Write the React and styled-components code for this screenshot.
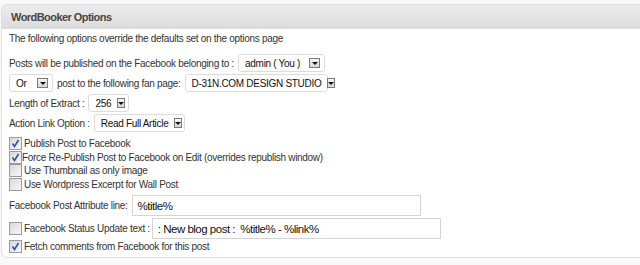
import React from 'react';
import styled, { createGlobalStyle } from 'styled-components';

const GlobalStyle = createGlobalStyle`
  body {
    margin: 0;
    background: #f9f9f9;
    font-family: "Liberation Sans", Arial, sans-serif;
    font-size: 10px;
    letter-spacing: -0.3px;
    color: #333;
  }
`;

const Page = styled.div`
  width: 640px;
  height: 265px;
  overflow: hidden;
  padding-top: 4px;
  box-sizing: border-box;
`;

const Box = styled.div`
  margin-left: 1px;
  width: 660px;
  height: 254px;
  border: 1px solid #dfdfdf;
  border-radius: 6px;
  background: #fff;
  overflow: hidden;
  box-sizing: border-box;
`;

const Header = styled.div`
  height: 23px;
  display: flex;
  align-items: center;
  padding-left: 9px;
  background: linear-gradient(to bottom, #ececec, #dcdcdc);
  border-bottom: 1px solid #dcdcdc;
  font-weight: bold;
  font-size: 11px;
  letter-spacing: -0.55px;
  color: #464646;
`;

const Body = styled.div`
  padding: 0 0 0 7px;
`;

const Row = styled.div`
  display: flex;
  align-items: center;
  gap: ${p => p.gap || 4}px;
  height: ${p => p.h || 20}px;
  margin-top: ${p => p.mt || 0}px;
  white-space: nowrap;
`;

const Select = styled.div`
  display: flex;
  align-items: center;
  justify-content: space-between;
  gap: 6px;
  width: ${p => p.w}px;
  height: 18px;
  box-sizing: border-box;
  padding: 0 4px 0 6px;
  border: 1px solid #dcdcdc;
  border-radius: 3px;
  background: #fff;
  color: #111;
`;

const Arrow = styled.span`
  display: flex;
  align-items: center;
  justify-content: center;
  width: 11px;
  height: 10px;
  box-sizing: border-box;
  border: 1px solid #7a7a7a;
  background: linear-gradient(to bottom, #f4f4f4, #d8d8d8);
  &::after {
    content: '';
    border-left: 3px solid transparent;
    border-right: 3px solid transparent;
    border-top: 3px solid #111;
  }
`;

const CheckRow = styled.label`
  display: flex;
  align-items: center;
  gap: ${p => p.gap ?? 2}px;
  height: ${p => p.h || 13.5}px;
  margin-top: ${p => p.mt || 0}px;
  white-space: nowrap;
`;

const CheckBox = styled.span`
  display: flex;
  align-items: center;
  justify-content: center;
  width: 13px;
  height: 13px;
  box-sizing: border-box;
  border: 1px solid #9a9a9a;
  background: linear-gradient(135deg, #d8d8d8, #f8f8f8);
  flex: none;
`;

const TextInput = styled.div`
  width: ${p => p.w}px;
  height: 21px;
  box-sizing: border-box;
  display: flex;
  align-items: center;
  padding-left: 5px;
  border: 1px solid #d4d4d4;
  background: #fff;
  color: #111;
  font-size: 11.5px;
  letter-spacing: -0.5px;
`;

const Spacer = styled.div`
  height: ${p => p.h}px;
`;

const Check = ({ on }) => (
  <CheckBox>
    {on && (
      <svg width="9" height="9" viewBox="0 0 9 9">
        <path d="M1.5 4.5 L3.5 7.5 L7.5 1" stroke="#2a56b8" strokeWidth="1.6" fill="none" />
      </svg>
    )}
  </CheckBox>
);

const Dropdown = ({ w, children }) => (
  <Select w={w}>
    <span>{children}</span>
    <Arrow />
  </Select>
);

export default function App() {
  return (
    <Page>
      <GlobalStyle />
      <Box>
        <Header>WordBooker Options</Header>
        <Body>
          <Row h={18}>The following options override the defaults set on the options page</Row>
          <Row mt={6}>
            Posts will be published on the Facebook belonging to :
            <Dropdown w={87}>admin ( You )</Dropdown>
          </Row>
          <Row>
            <Dropdown w={44}>Or</Dropdown>
            post to the following fan page:
            <Dropdown w={143}>D-31N.COM DESIGN STUDIO</Dropdown>
          </Row>
          <Row>
            Length of Extract :
            <Dropdown w={41}>256</Dropdown>
          </Row>
          <Row>
            Action Link Option :
            <Dropdown w={91}>Read Full Article</Dropdown>
          </Row>
          <Spacer h={4} />
          <CheckRow><Check on /><span>Publish Post to Facebook</span></CheckRow>
          <CheckRow gap={0}><Check on /><span>Force Re-Publish Post to Facebook on Edit (overrides republish window)</span></CheckRow>
          <CheckRow><Check /><span>Use Thumbnail as only image</span></CheckRow>
          <CheckRow><Check /><span>Use Wordpress Excerpt for Wall Post</span></CheckRow>
          <Row h={21} mt={4}>
            Facebook Post Attribute line:
            <TextInput w={289}>%title%</TextInput>
          </Row>
          <CheckRow h={21} mt={2}>
            <Check />
            <span>Facebook Status Update text :</span>
            <TextInput w={289}>: New blog post :&nbsp; %title% - %link%</TextInput>
          </CheckRow>
          <CheckRow h={14}><Check on /><span>Fetch comments from Facebook for this post</span></CheckRow>
        </Body>
      </Box>
    </Page>
  );
}
